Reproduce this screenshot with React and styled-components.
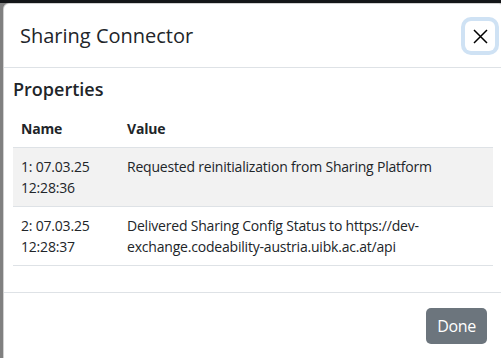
import React from 'react';
import styled, { createGlobalStyle } from 'styled-components';

const GlobalStyle = createGlobalStyle`
  html, body {
    margin: 0;
    padding: 0;
    width: 501px;
    height: 358px;
    overflow: hidden;
    background: #808080;
    font-family: "Open Sans", "Noto Sans", sans-serif;
    color: #212529;
  }
`;

const Page = styled.div`
  display: flex;
  flex-direction: column;
  height: 358px;
`;

const TopBar = styled.div`
  height: 3px;
  flex: none;
  background: #141619;
`;

const Modal = styled.div`
  margin-left: 3px;
  width: 500px;
  flex: 1;
  background: #fff;
  border: 1px solid rgba(0, 0, 0, 0.18);
  border-bottom: none;
  border-radius: 6px 6px 0 0;
  display: flex;
  flex-direction: column;
`;

const Header = styled.div`
  display: flex;
  align-items: center;
  justify-content: space-between;
  padding: 17px 9px 16px 16px;
  border-bottom: 1px solid #dee2e6;
`;

const Title = styled.h5`
  margin: 0;
  font-size: 20px;
  font-weight: 400;
  line-height: 30px;
`;

const CloseButton = styled.button`
  width: 30px;
  height: 30px;
  padding: 0;
  display: flex;
  align-items: center;
  justify-content: center;
  background: #fff;
  border: none;
  border-radius: 6px;
  box-shadow: 0 0 0 4px #cfe2f4;
  color: #000;
`;

const Body = styled.div`
  padding: 10px 11px 26px 9px;
  border-bottom: 1px solid #dee2e6;
`;

const Heading = styled.h6`
  margin: 0 0 10px;
  font-size: 18px;
  font-weight: 600;
  line-height: 22px;
`;

const Table = styled.table`
  width: 100%;
  table-layout: fixed;
  border-collapse: collapse;
  font-size: 14px;
  line-height: 21px;
  letter-spacing: -0.2px;
`;

const Th = styled.th`
  text-align: left;
  font-weight: 700;
  padding: 8px;
  border-bottom: 1px solid #dee2e6;
  width: ${(p) => p.$width || 'auto'};
`;

const Row = styled.tr`
  background: ${(p) => (p.$striped ? '#f2f2f2' : '#fff')};
`;

const Td = styled.td`
  padding: 8px;
  vertical-align: top;
  border-bottom: 1px solid #dee2e6;
`;

const Footer = styled.div`
  display: flex;
  justify-content: flex-end;
  padding: 15px 17px;
`;

const DoneButton = styled.button`
  height: 36px;
  padding: 0 11px;
  font-family: inherit;
  font-size: 16px;
  letter-spacing: -0.3px;
  color: #fff;
  background: #6c757d;
  border: none;
  border-radius: 5px;
`;

const rows = [
  { name: '1: 07.03.25 12:28:36', value: 'Requested reinitialization from Sharing Platform' },
  {
    name: '2: 07.03.25 12:28:37',
    value: 'Delivered Sharing Config Status to https://dev-exchange.codeability-austria.uibk.ac.at/api',
  },
];

export default function App() {
  return (
    <Page>
      <GlobalStyle />
      <TopBar />
      <Modal>
        <Header>
          <Title>Sharing Connector</Title>
          <CloseButton aria-label="Close">
            <svg width="15" height="15" viewBox="0 0 15 15">
              <path d="M1 1L14 14M14 1L1 14" stroke="currentColor" strokeWidth="1.5" fill="none" />
            </svg>
          </CloseButton>
        </Header>
        <Body>
          <Heading>Properties</Heading>
          <Table>
            <thead>
              <tr>
                <Th $width="90px">Name</Th>
                <Th>Value</Th>
              </tr>
            </thead>
            <tbody>
              {rows.map((r, i) => (
                <Row key={r.name} $striped={i % 2 === 0}>
                  <Td>{r.name}</Td>
                  <Td>{r.value}</Td>
                </Row>
              ))}
            </tbody>
          </Table>
        </Body>
        <Footer>
          <DoneButton>Done</DoneButton>
        </Footer>
      </Modal>
    </Page>
  );
}
